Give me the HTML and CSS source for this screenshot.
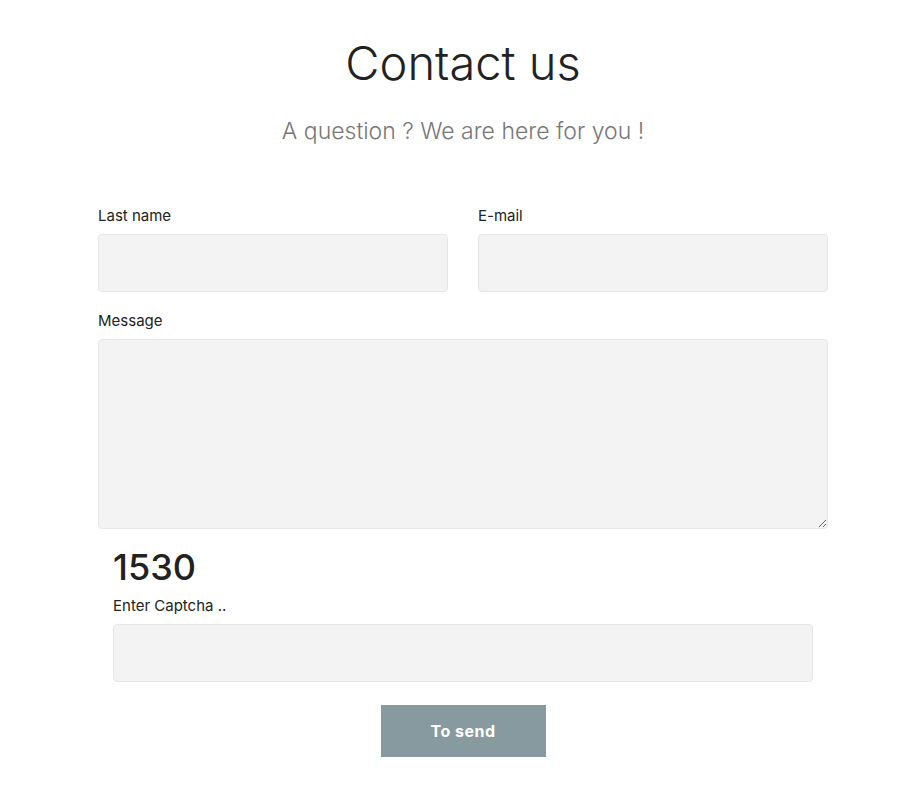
FILE: index.html
```html
<!DOCTYPE html>
<html lang="en">
<head>
    <meta charset="UTF-8">
    <title>Contact us</title>
    <meta name="viewport" content="width=device-width, initial-scale=1.0">
    <link rel="stylesheet" href="styles.css">
</head>
<body>
    <div class="contact-container">
        <h1 class="contact-title">Contact us</h1>
        <p class="contact-subtitle">A question ? We are here for you !</p>

        <form class="contact-form" onsubmit="return false;">
            <div class="form-row">
                <div class="form-group">
                    <label class="form-label" for="lastname">Last name</label>
                    <input type="text" id="lastname" class="form-input">
                </div>
                <div class="form-group">
                    <label class="form-label" for="email">E-mail</label>
                    <input type="email" id="email" class="form-input">
                </div>
            </div>
            <div class="form-group">
                <label class="form-label" for="message">Message</label>
                <textarea id="message" class="form-input form-textarea"></textarea>
            </div>

            <div class="captcha-section">
                <div class="captcha-code">1530</div>
                <label class="form-label" for="captcha">Enter Captcha ..</label>
                <input type="text" id="captcha" class="form-input">
            </div>

            <div class="form-actions">
                <button type="submit" class="send-btn">To send</button>
            </div>
        </form>
    </div>
</body>
</html>
```

FILE: styles.css
```css
* {
    box-sizing: border-box;
}

body {
    margin: 0;
    font-family: Inter, 'Noto Sans', sans-serif;
    color: #222;
    background: white;
}

.contact-container {
    width: 730px;
    margin-left: 98px;
    padding-top: 35px;
}

.contact-title {
    text-align: center;
    font-size: 47px;
    font-weight: 300;
    margin: 0;
    line-height: 56px;
    color: #222;
}

.contact-subtitle {
    text-align: center;
    font-size: 23px;
    font-weight: 300;
    color: #777;
    margin: 25px 0 0;
    line-height: 30px;
}

.contact-form {
    margin-top: 61px;
}

.form-row {
    display: grid;
    grid-template-columns: 1fr 1fr;
    gap: 30px;
}

.form-group {
    margin-bottom: 20px;
}

.form-label {
    display: block;
    font-size: 15px;
    line-height: 18px;
    margin-bottom: 9px;
    color: #222;
}

.form-input {
    display: block;
    width: 100%;
    height: 58px;
    background: #f3f3f3;
    border: 1px solid #e6e6e6;
    border-radius: 4px;
    font-family: inherit;
    font-size: 15px;
    padding: 10px 14px;
}

.form-input:focus {
    outline: none;
    border-color: #879a9f;
}

.form-textarea {
    height: 190px;
    resize: vertical;
}

.captcha-section {
    margin-top: -4px;
    padding: 0 15px;
}

.captcha-code {
    font-size: 36px;
    font-weight: 500;
    line-height: 44px;
    margin-bottom: 8px;
}

.form-actions {
    display: flex;
    justify-content: center;
    margin-top: 23px;
}

.send-btn {
    width: 165px;
    height: 52px;
    background: #879a9f;
    color: white;
    border: none;
    font-family: inherit;
    font-size: 16px;
    font-weight: 700;
    letter-spacing: 0.5px;
    cursor: pointer;
}

.send-btn:hover {
    background: #76898e;
}
```
